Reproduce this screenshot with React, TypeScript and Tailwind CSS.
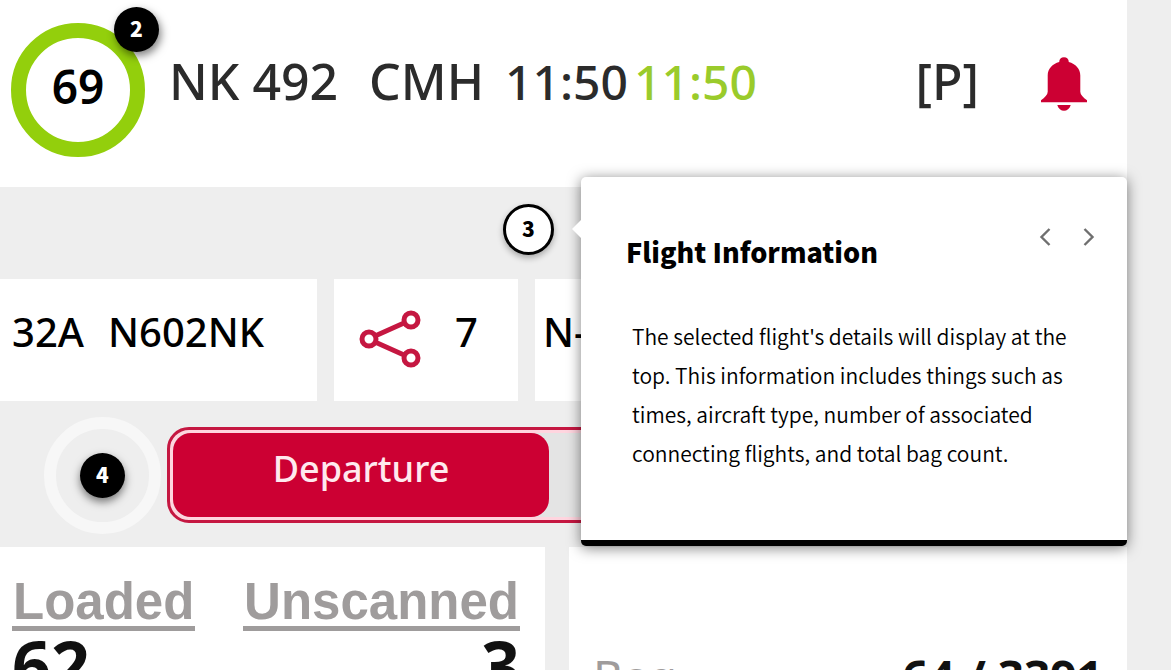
import type { ReactNode } from "react";

function Marker({ n, className }: { n: number; className: string }) {
  return (
    <button
      type="button"
      aria-label={`Step ${n}`}
      className={`absolute z-10 flex items-center justify-center rounded-full pb-[3px] font-['Noto_Sans_CJK_SC',sans-serif] text-[21px] leading-none font-black ${className}`}
    >
      {n}
    </button>
  );
}

function Chevron({ d, label }: { d: string; label: string }) {
  return (
    <button type="button" aria-label={label} className="flex h-11 w-11 items-center justify-center text-[#6f6f6f]">
      <svg width="12" height="20" viewBox="0 0 12 20" fill="none" stroke="currentColor" strokeWidth="2.4">
        <path d={d} />
      </svg>
    </button>
  );
}

function Tile({ className, children }: { className: string; children?: ReactNode }) {
  return <div className={`flex h-[122px] items-center bg-white pb-4 ${className}`}>{children}</div>;
}

function Count({ label, value }: { label: string; value: string }) {
  return (
    <div>
      <div className="border-b-[5px] border-[#9f9c9c] px-px font-['Liberation_Sans',sans-serif] text-[51px] leading-[48px] font-bold text-[#9f9c9c]">{label}</div>
      <div className="text-[68px] leading-[68px] font-bold">{value}</div>
    </div>
  );
}

export default function App() {
  return (
    <main className="relative h-screen overflow-hidden bg-[#eeeeee] pr-11 font-['Noto_Sans',sans-serif] text-[#111111]">
      <header className="flex h-[187px] items-start bg-white pt-[23px] pr-10 pl-[11px] text-[50px] leading-[72px] whitespace-nowrap text-[#2b2b2b]">
        <div className="relative flex h-[134px] w-[134px] items-center justify-center rounded-full border-[15px] border-[#93cf0c] pb-2 text-[46px] font-semibold text-black">
          69
          <Marker n={2} className="-top-[31px] -right-[29px] h-[45px] w-[45px] bg-black text-white shadow-[2px_4px_8px_rgba(0,0,0,0.5)]" />
        </div>
        <div className="flex flex-1 items-baseline pt-[22px] pl-6 font-medium">
          <span className="w-[200px]">NK 492</span>
          <span className="w-[136px]">CMH</span>
          <span className="w-[129px] text-[48px]">11:50</span>
          <span className="text-[48px] text-[#9acb2b]">11:50</span>
          <span className="mr-[62px] ml-auto">[P]</span>
          <svg width="46" height="54" viewBox="0 0 48 56" fill="#cc0033" className="mt-3 self-start" role="img" aria-label="Alerts">
            <path d="M24 0c-3 0-5 2-5 5C12 7 7 12 7 19v17c0 3-3 6-7 9v2h48v-2c-4-3-7-6-7-9V19c0-7-5-12-12-14 0-3-2-5-5-5z" />
            <path d="M17 50h14c-1 4-4 6-7 6s-6-2-7-6z" />
          </svg>
        </div>
      </header>

      <div className="relative h-[92px]">
        <Marker n={3} className="top-[17px] left-[503px] h-[51px] w-[51px] border-[3px] border-black bg-white text-black shadow-[0_3px_6px_rgba(0,0,0,0.3)]" />
      </div>

      <section className="flex gap-[17px] text-[40px] leading-[56px] font-medium whitespace-nowrap text-black">
        <Tile className="w-[317px] gap-6 pl-3">
          <span>32A</span>
          <span>N602NK</span>
        </Tile>
        <Tile className="w-[184px] justify-between pr-10 pl-6">
          <svg width="64" height="60" viewBox="0 0 64 60" fill="none" stroke="#c51741" strokeWidth="5" className="mt-[14px]" role="img" aria-label="Connections">
            <circle cx="11" cy="30" r="7" />
            <circle cx="53" cy="11" r="7" />
            <circle cx="53" cy="49" r="7" />
            <path d="M17 27l29-13M17 33l29 13" />
          </svg>
          <span>7</span>
        </Tile>
        <Tile className="flex-1 pl-2">N-</Tile>
      </section>

      <div className="relative h-[146px] pt-[26px] pl-[167px]">
        <div className="absolute top-4 left-11 h-[117px] w-[117px] rounded-full border-[12px] border-[#f7f7f7]" />
        <Marker n={4} className="top-[52px] left-[80px] h-[45px] w-[45px] bg-black text-white shadow-[0_4px_8px_rgba(0,0,0,0.5)]" />
        <div className="flex h-[96px] rounded-[22px] border-[3px] border-[#c51741] bg-[#e4e4e4] shadow-[inset_0_0_0_3px_#ffd5df]">
          <button type="button" className="my-[3px] ml-[3px] w-[376px] rounded-[18px] bg-[#cc0033] pb-3 text-[36px] font-medium text-[#ffe9ee]">
            Departure
          </button>
        </div>
      </div>

      <section className="flex gap-6 whitespace-nowrap">
        <div className="flex w-[545px] justify-between bg-white pt-[31px] pr-[25px] pb-20 pl-3">
          <Count label="Loaded" value="62" />
          <div className="text-right">
            <Count label="Unscanned" value="3" />
          </div>
        </div>
        <div className="flex flex-1 items-start justify-between bg-white pt-[97px] pr-6 pb-20 pl-6 text-[46px] leading-[64px]">
          <span className="text-[#9f9c9c]">Bag</span>
          <span className="font-bold">64 / 3391</span>
        </div>
      </section>

      <aside className="absolute top-[177px] right-11 w-[546px] rounded-[5px] border-b-[6px] border-black bg-white font-['Noto_Sans_CJK_SC',sans-serif] text-black shadow-[0_2px_14px_rgba(0,0,0,0.5)]">
        <span className="absolute top-[43px] -left-[9px] h-[18px] w-[9px] bg-white [clip-path:polygon(100%_0,0_50%,100%_100%)]" />
        <div className="flex items-start justify-between pt-[38px] pr-4 pl-[45px]">
          <h1 className="pt-[17px] text-[27px] leading-[40px] font-black">Flight Information</h1>
          <div className="flex">
            <Chevron d="M10.500 2L2.500 10l8 8" label="Previous" />
            <Chevron d="M1.500 2l8 8-8 8" label="Next" />
          </div>
        </div>
        <p className="pt-[45px] pr-12 pb-[67px] pl-[51px] text-[21px] leading-[39px] font-[350]">
          The selected flight's details will display at the top. This information includes things such as times, aircraft type, number of associated connecting flights, and total bag count.
        </p>
      </aside>
    </main>
  );
}
